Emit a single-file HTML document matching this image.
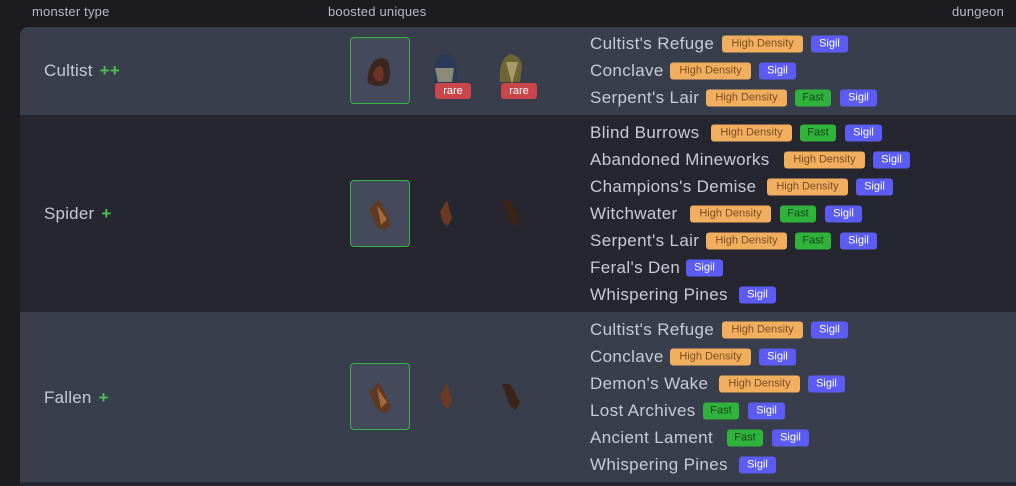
<!DOCTYPE html>
<html><head><meta charset="utf-8"><style>
*{margin:0;padding:0;box-sizing:border-box}
body{width:1016px;height:486px;overflow:hidden;background:#1b1b20;font-family:"Liberation Sans",sans-serif;position:relative}
.h{position:absolute;top:4px;font-size:13px;color:#b9bcc4;letter-spacing:0.2px}
.row{position:absolute;left:20px;width:996px}
.l{background:#393e4c}.d{background:#262630}
.m{position:absolute;left:44px;font-size:17px;color:#c6c9d1;transform:translateY(-50%);letter-spacing:0.2px}
.m span{color:#4cc052;margin-left:7px;font-weight:bold}
.n{position:absolute;left:590px;font-size:17px;color:#c8cbd3;transform:translateY(-50%);white-space:nowrap;letter-spacing:0.35px}
.b{position:absolute;height:17px;border-radius:3px;font-size:11px;line-height:17px;text-align:center;transform:translateY(-50%)}
.hd{width:81px;background:#f1ae5e;color:#7b4d22}
.f{width:36px;background:#2fb33a;color:#16461b}
.s{width:37px;background:#5c5cf5;color:#fff}
.box{position:absolute;left:350px;width:60px;height:67px;border:1px solid #36b542;border-radius:4px;background:#444a5b}
.ic{position:absolute}
.rare{position:absolute;width:36px;height:16px;background:#c9464a;color:#fff;font-size:11px;line-height:16px;text-align:center;border-radius:3px}
</style></head><body>
<div class="h" style="left:32px">monster type</div>
<div class="h" style="left:328px">boosted uniques</div>
<div class="h" style="left:952px">dungeon</div>

<div class="row l" style="top:27px;height:88px;border-top-left-radius:8px"></div>
<div class="row d" style="top:115px;height:197px"></div>
<div class="row l" style="top:312px;height:170px"></div>
<div class="row d" style="top:482px;height:4px"></div>

<div class="m" style="top:71px">Cultist<span>++</span></div>
<div class="m" style="top:214px">Spider<span>+</span></div>
<div class="m" style="top:398px">Fallen<span>+</span></div>

<div class="box" style="top:37px"></div>
<svg class="ic" style="left:364px;top:53px" width="30" height="36"><path d="M4 30 Q2 18 10 8 Q18 2 24 8 Q28 22 24 30 Q14 36 4 30Z" fill="#3e2620"/><path d="M9 22 Q10 14 17 13 Q22 20 18 28 Q12 30 9 22Z" fill="#6e3426"/></svg>
<svg class="ic" style="left:430px;top:50px" width="30" height="36"><path d="M4 30 Q2 10 12 4 Q24 2 26 14 L28 34 L4 34Z" fill="#2c3a55"/><path d="M5 18 L24 18 L22 32 L8 32Z" fill="#8a8a78"/></svg>
<svg class="ic" style="left:496px;top:50px" width="30" height="36"><path d="M4 32 Q2 10 14 4 Q26 6 26 18 L24 32 Z" fill="#6e6535"/><path d="M10 12 L22 12 L16 34Z" fill="#a89a6a"/></svg>
<div class="rare" style="left:435px;top:83px">rare</div>
<div class="rare" style="left:501px;top:83px">rare</div>

<div class="box" style="top:180px"></div>
<svg class="ic" style="left:365px;top:195px" width="30" height="38"><path d="M4 14 L14 4 L26 28 L20 36 L12 32 Z" fill="#5e3a22"/><path d="M12 10 L22 24 L16 30Z" fill="#a66a3a"/></svg>
<svg class="ic" style="left:437px;top:198px" width="20" height="30"><path d="M3 14 L10 2 L15 20 L11 28 L6 24Z" fill="#6a3a24"/></svg>
<svg class="ic" style="left:500px;top:197px" width="24" height="32"><path d="M2 4 L10 4 L20 22 L16 30 L10 26Z" fill="#3a2418"/></svg>

<div class="box" style="top:363px"></div>
<svg class="ic" style="left:365px;top:378px" width="30" height="38"><path d="M4 14 L14 4 L26 28 L20 36 L12 32 Z" fill="#5e3a22"/><path d="M12 10 L22 24 L16 30Z" fill="#a66a3a"/></svg>
<svg class="ic" style="left:437px;top:381px" width="20" height="30"><path d="M3 14 L10 2 L15 20 L11 28 L6 24Z" fill="#6a3a24"/></svg>
<svg class="ic" style="left:500px;top:380px" width="24" height="32"><path d="M2 4 L10 4 L20 22 L16 30 L10 26Z" fill="#3a2418"/></svg>

<div class="n" style="top:44px">Cultist's Refuge</div><div class="b hd" style="left:722px;top:44px">High Density</div><div class="b s" style="left:811px;top:44px">Sigil</div>
<div class="n" style="top:71px">Conclave</div><div class="b hd" style="left:670px;top:71px">High Density</div><div class="b s" style="left:759px;top:71px">Sigil</div>
<div class="n" style="top:98px">Serpent's Lair</div><div class="b hd" style="left:706px;top:98px">High Density</div><div class="b f" style="left:795px;top:98px">Fast</div><div class="b s" style="left:840px;top:98px">Sigil</div>

<div class="n" style="top:133px">Blind Burrows</div><div class="b hd" style="left:711px;top:133px">High Density</div><div class="b f" style="left:800px;top:133px">Fast</div><div class="b s" style="left:845px;top:133px">Sigil</div>
<div class="n" style="top:160px">Abandoned Mineworks</div><div class="b hd" style="left:784px;top:160px">High Density</div><div class="b s" style="left:873px;top:160px">Sigil</div>
<div class="n" style="top:187px">Champions's Demise</div><div class="b hd" style="left:767px;top:187px">High Density</div><div class="b s" style="left:856px;top:187px">Sigil</div>
<div class="n" style="top:214px">Witchwater</div><div class="b hd" style="left:690px;top:214px">High Density</div><div class="b f" style="left:780px;top:214px">Fast</div><div class="b s" style="left:825px;top:214px">Sigil</div>
<div class="n" style="top:241px">Serpent's Lair</div><div class="b hd" style="left:706px;top:241px">High Density</div><div class="b f" style="left:795px;top:241px">Fast</div><div class="b s" style="left:840px;top:241px">Sigil</div>
<div class="n" style="top:268px">Feral's Den</div><div class="b s" style="left:686px;top:268px">Sigil</div>
<div class="n" style="top:295px">Whispering Pines</div><div class="b s" style="left:739px;top:295px">Sigil</div>

<div class="n" style="top:330px">Cultist's Refuge</div><div class="b hd" style="left:722px;top:330px">High Density</div><div class="b s" style="left:811px;top:330px">Sigil</div>
<div class="n" style="top:357px">Conclave</div><div class="b hd" style="left:670px;top:357px">High Density</div><div class="b s" style="left:759px;top:357px">Sigil</div>
<div class="n" style="top:384px">Demon's Wake</div><div class="b hd" style="left:719px;top:384px">High Density</div><div class="b s" style="left:808px;top:384px">Sigil</div>
<div class="n" style="top:411px">Lost Archives</div><div class="b f" style="left:703px;top:411px">Fast</div><div class="b s" style="left:748px;top:411px">Sigil</div>
<div class="n" style="top:438px">Ancient Lament</div><div class="b f" style="left:727px;top:438px">Fast</div><div class="b s" style="left:772px;top:438px">Sigil</div>
<div class="n" style="top:465px">Whispering Pines</div><div class="b s" style="left:739px;top:465px">Sigil</div>
</body></html>
